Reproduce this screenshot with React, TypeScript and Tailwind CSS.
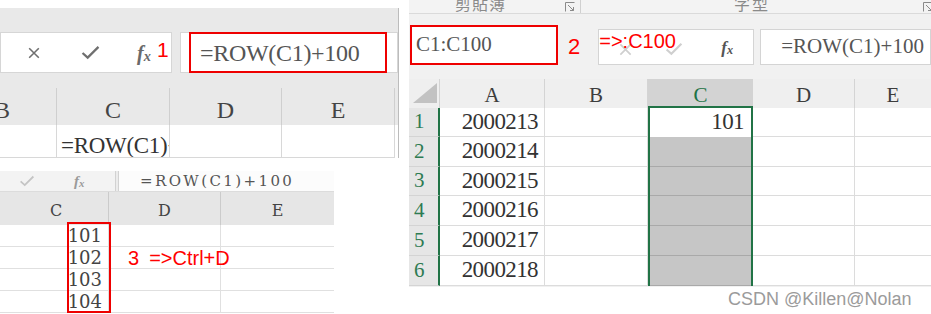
import React from 'react';

const serif = "font-['Liberation_Serif',serif]";
const sans = "font-['Liberation_Sans',Arial,sans-serif]";

const XIcon = ({ className }: { className?: string }) => (
  <svg viewBox="0 0 16 16" className={className} fill="none" stroke="currentColor" strokeWidth={1.8}>
    <path d="M2.5 2.5 L13.5 13.5 M13.5 2.5 L2.5 13.5" />
  </svg>
);

const CheckIcon = ({ className }: { className?: string }) => (
  <svg viewBox="0 0 20 16" className={className} fill="none" stroke="currentColor" strokeWidth={2.4}>
    <path d="M1.5 8.5 L7 13.5 L18.5 2" />
  </svg>
);

const Fx = ({ className }: { className?: string }) => (
  <span className={`font-['Liberation_Serif',serif] italic font-bold leading-none ${className ?? ''}`}>
    f<span className="text-[0.72em] relative top-[0.12em]">x</span>
  </span>
);

const Launcher = () => (
  <svg viewBox="0 0 10 10" className="w-[10px] h-[10px] text-[#8a8a8a]" fill="none" stroke="currentColor" strokeWidth={1}>
    <path d="M0.5 9.5 V0.5 H9.5" />
    <path d="M3 3 L8.5 8.5 M5 8.5 H8.5 V5" />
  </svg>
);

const TopLeftPanel = () => (
  <div className="w-[399px] h-[150px] bg-[#e9e9e9] border-r border-[#bcbcbc] flex flex-col">
    <div className="h-[24px]" />
    <div className="flex h-[41px]">
      <div className="w-[172px] bg-white border border-[#d6d6d6] flex items-center text-[#6f6f6f]">
        <XIcon className="w-[14px] h-[14px] ml-[26px]" />
        <CheckIcon className="w-[19px] h-[15px] ml-[40px]" />
        <Fx className="text-[20px] ml-[37px] text-[#6a6a6a]" />
        <span className={`${sans} text-[21px] text-[#ff0000] ml-[6px] -mt-[6px]`}>1</span>
      </div>
      <div className="w-[8px]" />
      <div className="flex-1 bg-white border border-[#d6d6d6] flex items-center pl-[8px]">
        <div className={`${serif} w-[198px] h-[41px] border-2 border-[#ee0000] flex items-center pl-[9px] text-[24px] text-[#555] tracking-[-0.3px]`}>
          =ROW(C1)+100
        </div>
      </div>
    </div>
    <div className="h-[15px]" />
    <div className={`${serif} flex h-[37px] text-[24px] text-[#444]`}>
      <div className="w-[57px] border-r border-[#cfcfcf] flex items-center pt-[6px] overflow-hidden">
        <span className="-ml-[6px]">B</span>
      </div>
      <div className="w-[113px] border-r border-[#cfcfcf] flex items-center justify-center pt-[6px]">C</div>
      <div className="w-[112px] border-r border-[#cfcfcf] flex items-center justify-center pt-[6px]">D</div>
      <div className="w-[113px] border-r border-[#cfcfcf] flex items-center justify-center pt-[6px]">E</div>
    </div>
    <div className={`${serif} flex h-[33px] bg-white text-[23px] text-[#333]`}>
      <div className="w-[57px] border-r border-b border-[#d8d8d8]" />
      <div className="w-[113px] border-r border-b border-[#d8d8d8] overflow-hidden whitespace-nowrap pl-[4px] pt-[4px] tracking-[-0.3px]">
        =ROW(C1)+100
      </div>
      <div className="w-[112px] border-r border-b border-[#d8d8d8]" />
      <div className="w-[113px] border-r border-b border-[#d8d8d8]" />
    </div>
  </div>
);

const BottomLeftPanel = () => {
  const values = ['101', '102', '103', '104'];
  return (
    <div className="relative w-[334px] h-[142px] flex flex-col">
      <div className="flex h-[20px]">
        <div className="w-[115px] bg-[#f3f3f3] flex items-center text-[#c4c4c4]">
          <CheckIcon className="w-[18px] h-[12px] ml-[18px]" />
          <Fx className="text-[15px] ml-[38px] text-[#9a9a9a]" />
        </div>
        <div className="w-[4px] border-x border-[#d2d2d2] bg-[#ececec]" />
        <div className={`flex-1 bg-[#fcfcfc] flex items-center pl-[21px] text-[15px] text-[#555] tracking-[2.4px] font-['DejaVu_Serif',serif]`}>
          =ROW(C1)+100
        </div>
      </div>
      <div className={`flex h-[34px] bg-[#e6e6e6] border-t border-[#dcdcdc] text-[16px] text-[#444] font-['DejaVu_Serif',serif]`}>
        <div className="w-[109px] border-r border-[#cbcbcb] flex items-end justify-center pb-[2px] pl-[4px]">C</div>
        <div className="w-[112px] border-r border-[#cbcbcb] flex items-end justify-center pb-[2px]">D</div>
        <div className="w-[113px] flex items-end justify-center pb-[2px]">E</div>
      </div>
      {values.map((v, i) => (
        <div key={v} className="flex h-[22px] bg-white text-[18px] text-[#444] font-['DejaVu_Serif',serif]">
          <div className="w-[109px] border-r border-b border-[#e0e0e0] flex items-center justify-end pr-[6px] leading-none">{v}</div>
          <div className="w-[112px] border-r border-b border-[#e0e0e0] relative">
            {i === 1 && (
              <span className={`${sans} absolute left-[19px] top-[1px] whitespace-nowrap text-[20px] leading-none text-[#ff0000]`}>
                3<span className="ml-[10px]">=&gt;Ctrl+D</span>
              </span>
            )}
          </div>
          <div className="w-[113px] border-b border-[#e0e0e0]" />
        </div>
      ))}
      <div className="absolute left-[67px] top-[51px] w-[44px] h-[91px] border-2 border-[#ee0000]" />
    </div>
  );
};

const rows = [
  { n: '1', a: '2000213', h: 'h-[29px]' },
  { n: '2', a: '2000214', h: 'h-[30px]' },
  { n: '3', a: '2000215', h: 'h-[29px]' },
  { n: '4', a: '2000216', h: 'h-[30px]' },
  { n: '5', a: '2000217', h: 'h-[30px]' },
  { n: '6', a: '2000218', h: 'h-[30px]' },
];

const RightPanel = () => (
  <div className="w-[522px] flex flex-col">
    <div className="h-[287px] bg-[#f1f1f1] flex flex-col">
      <div className="h-[14px] bg-[#f3f3f3] border-b border-[#dadada] flex items-start overflow-hidden relative">
        <span className="absolute left-[46px] -top-[9px] text-[16px] text-[#8a8a8a] font-['Noto_Sans_CJK_TC',sans-serif] tracking-[1px]">剪貼簿</span>
        <span className="absolute left-[156px] top-[2px]"><Launcher /></span>
        <span className="absolute left-[171px] top-0 h-[14px] border-l border-[#d0d0d0]" />
        <span className="absolute left-[325px] -top-[9px] text-[16px] text-[#8a8a8a] font-['Noto_Sans_CJK_TC',sans-serif] tracking-[2px]">字型</span>
        <span className="absolute left-[514px] top-[2px]"><Launcher /></span>
      </div>
      <div className="h-[11px]" />
      <div className="flex h-[40px] items-end">
        <div className={`${serif} ml-[1px] w-[148px] h-[40px] border-2 border-[#ee0000] bg-white flex items-center pl-[4px] text-[21px] text-[#555]`}>
          C1:C100
        </div>
        <span className={`${sans} self-center text-[22px] text-[#ff0000] ml-[10px] mt-[2px]`}>2</span>
        <div className="relative ml-[18px] w-[156px] h-[36px] bg-white border border-[#d4d4d4] flex items-center text-[#cfcfcf]">
          <XIcon className="w-[15px] h-[15px] ml-[19px] mt-[4px]" />
          <CheckIcon className="w-[18px] h-[14px] ml-[32px] mt-[4px]" />
          <Fx className="text-[17px] ml-[38px] text-[#555]" />
          <span className={`${sans} absolute left-0 top-[1px] text-[20px] leading-none text-[#ff0000] whitespace-nowrap`}>=&gt;:C100</span>
        </div>
        <div className={`${serif} ml-[6px] flex-1 h-[36px] bg-white border border-[#d4d4d4] flex items-center pl-[20px] text-[21px] text-[#555] whitespace-nowrap overflow-hidden`}>
          =ROW(C1)+100
        </div>
      </div>
      <div className="h-[14px]" />
      <div className={`${serif} flex h-[29px] text-[21px] text-[#3d3d3d] bg-[#efefef]`}>
        <div className="w-[31px] border-r border-[#d4d4d4] relative">
          <svg viewBox="0 0 24 20" className="absolute left-[4px] top-[4px] w-[24px] h-[20px]">
            <polygon points="24,0 24,20 0,20" fill="#c2c2c2" />
          </svg>
        </div>
        <div className="w-[105px] border-r border-[#d4d4d4] flex items-center justify-center pt-[4px]">A</div>
        <div className="w-[103px] border-r border-[#d4d4d4] flex items-center justify-center pt-[4px]">B</div>
        <div className="w-[105px] bg-[#d3d3d3] border-b-2 border-[#217346] text-[#217346] flex items-center justify-center pt-[6px]">C</div>
        <div className="w-[102px] border-r border-[#d4d4d4] flex items-center justify-center pt-[4px]">D</div>
        <div className="w-[76px] flex items-center justify-center pt-[4px]">E</div>
      </div>
      {rows.map((r, i) => (
        <div key={r.n} className={`${serif} flex ${r.h} text-[23px] text-[#333]`}>
          <div className="w-[31px] bg-[#e6e6e6] border-r-2 border-[#217346] border-b border-b-[#d4d4d4] flex items-center pl-[5px] text-[21px] text-[#2e7b52]">
            {r.n}
          </div>
          <div className="w-[105px] bg-white border-r border-b border-[#dcdcdc] flex items-center justify-end pr-[6px] tracking-[-0.6px]">
            {r.a}
          </div>
          <div className="w-[103px] bg-white border-r border-b border-[#dcdcdc]" />
          {i === 0 ? (
            <div className="w-[105px] bg-white border-x-2 border-[#217346] flex items-center justify-end pr-[7px] tracking-[-0.6px]">
              101
            </div>
          ) : (
            <div className="w-[105px] bg-[#c6c6c6] border-x-2 border-[#217346] shadow-[inset_0_-1px_0_#a9a9a9]" />
          )}
          <div className="w-[102px] bg-white border-r border-b border-[#dcdcdc]" />
          <div className="w-[76px] bg-white border-b border-[#dcdcdc]" />
        </div>
      ))}
    </div>
    <div className={`${sans} pl-[319px] pt-[3px] text-[18px] text-[#9b9b9b] leading-none`}>CSDN @Killen@Nolan</div>
  </div>
);

export default function App() {
  return (
    <div className="w-[931px] h-[314px] bg-white overflow-hidden flex">
      <div className="w-[405px] flex flex-col pt-[8px]">
        <TopLeftPanel />
        <div className="h-[13px]" />
        <BottomLeftPanel />
      </div>
      <div className="w-[4px]" />
      <RightPanel />
    </div>
  );
}
